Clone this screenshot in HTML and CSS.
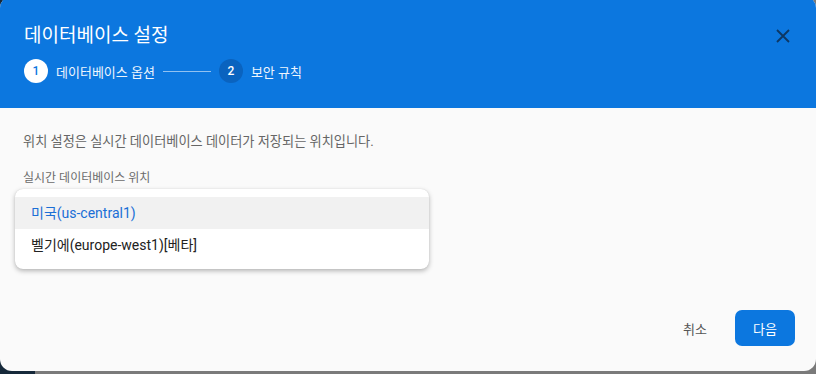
FILE: index.html
```html
<!DOCTYPE html>
<html lang="ko">
<head>
    <meta charset="UTF-8">
    <title>데이터베이스 설정</title>
    <link rel="stylesheet" href="styles.css">
</head>
<body>
    <div class="dialog">
        <!-- Header with stepper -->
        <div class="dialog-header">
            <div class="title-row">
                <h1 class="title">데이터베이스 설정</h1>
                <button class="close-btn" aria-label="닫기">
                    <svg width="14" height="14" viewBox="0 0 14 14">
                        <path d="M1 1 L13 13 M13 1 L1 13" stroke="currentColor" stroke-width="1.8" fill="none"/>
                    </svg>
                </button>
            </div>
            <div class="stepper">
                <div class="step active">
                    <span class="step-num">1</span>
                    <span class="step-label">데이터베이스 옵션</span>
                </div>
                <div class="step-line"></div>
                <div class="step">
                    <span class="step-num">2</span>
                    <span class="step-label">보안 규칙</span>
                </div>
            </div>
        </div>

        <div class="dialog-body">
            <p class="desc">위치 설정은 실시간 데이터베이스 데이터가 저장되는 위치입니다.</p>
            <div class="field-label">실시간 데이터베이스 위치</div>
            <ul class="dropdown">
                <li class="option selected">미국(us-central1)</li>
                <li class="option">벨기에(europe-west1)[베타]</li>
            </ul>
        </div>

        <div class="dialog-actions">
            <button class="btn-text">취소</button>
            <button class="btn-primary">다음</button>
        </div>
    </div>
</body>
</html>
```

FILE: styles.css
```css
/* General Styles */
* {
    margin: 0;
    padding: 0;
    box-sizing: border-box;
    font-family: 'Roboto', 'Noto Sans CJK KR', sans-serif;
}

body {
    width: 816px;
    height: 374px;
    overflow: hidden;
    background: linear-gradient(to right, #16293a 0, #16293a 35px, #7a7a7a 35px);
}

.dialog {
    width: 816px;
    height: 375px;
    margin-top: -4px;
    border-radius: 12px;
    overflow: hidden;
    background-color: #fafafa;
    display: flex;
    flex-direction: column;
}

/* Header */
.dialog-header {
    background-color: #0c77df;
    color: white;
    height: 112px;
    padding: 25px 24px 0 24px;
}

.title-row {
    display: flex;
    align-items: center;
    justify-content: space-between;
}

.title {
    font-size: 19px;
    font-weight: 400;
    line-height: 30px;
}

.close-btn {
    background: transparent;
    border: none;
    color: #0d3763;
    width: 20px;
    height: 20px;
    display: flex;
    align-items: center;
    justify-content: center;
    margin-right: -1px;
    cursor: pointer;
}

.stepper {
    display: flex;
    align-items: center;
    margin-top: 8px;
}

.step {
    display: flex;
    align-items: center;
    gap: 8px;
}

.step-num {
    width: 24px;
    height: 24px;
    border-radius: 50%;
    background-color: #0a63bf;
    color: white;
    font-size: 12px;
    font-weight: 500;
    display: flex;
    align-items: center;
    justify-content: center;
}

.step.active .step-num {
    background-color: white;
    color: #0c77df;
}

.step-label {
    font-size: 13px;
    color: #eef5fd;
}

.step-line {
    width: 48px;
    height: 1px;
    background-color: rgba(255, 255, 255, 0.55);
    margin: 0 8px 0 8px;
}

/* Body */
.dialog-body {
    padding: 25px 24px 0 15px;
    flex: 1;
}

.desc {
    font-size: 13.2px;
    color: #666;
    padding-left: 8px;
    line-height: 18px;
}

.field-label {
    font-size: 12px;
    color: #6b6b6b;
    padding-left: 8px;
    margin-top: 19px;
    line-height: 16px;
}

.dropdown {
    list-style: none;
    width: 414px;
    margin-top: 3px;
    padding: 8px 0;
    background: white;
    border-radius: 8px;
    box-shadow: 0 2px 5px rgba(0, 0, 0, 0.28), 0 0 1px rgba(0, 0, 0, 0.15);
}

.option {
    height: 32px;
    line-height: 32px;
    padding-left: 16px;
    font-size: 14px;
    color: #222;
}

.option.selected {
    background-color: #f1f1f1;
    color: #1a6fd6;
}

/* Actions */
.dialog-actions {
    display: flex;
    justify-content: flex-end;
    align-items: center;
    gap: 14px;
    padding: 0 21px 25px 0;
}

.btn-text {
    background: transparent;
    border: none;
    font-size: 13px;
    color: #555;
    padding: 0 14px;
    height: 36px;
    cursor: pointer;
}

.btn-primary {
    background-color: #0c77df;
    border: none;
    border-radius: 7px;
    color: white;
    font-size: 13px;
    width: 60px;
    height: 36px;
    cursor: pointer;
}
```
